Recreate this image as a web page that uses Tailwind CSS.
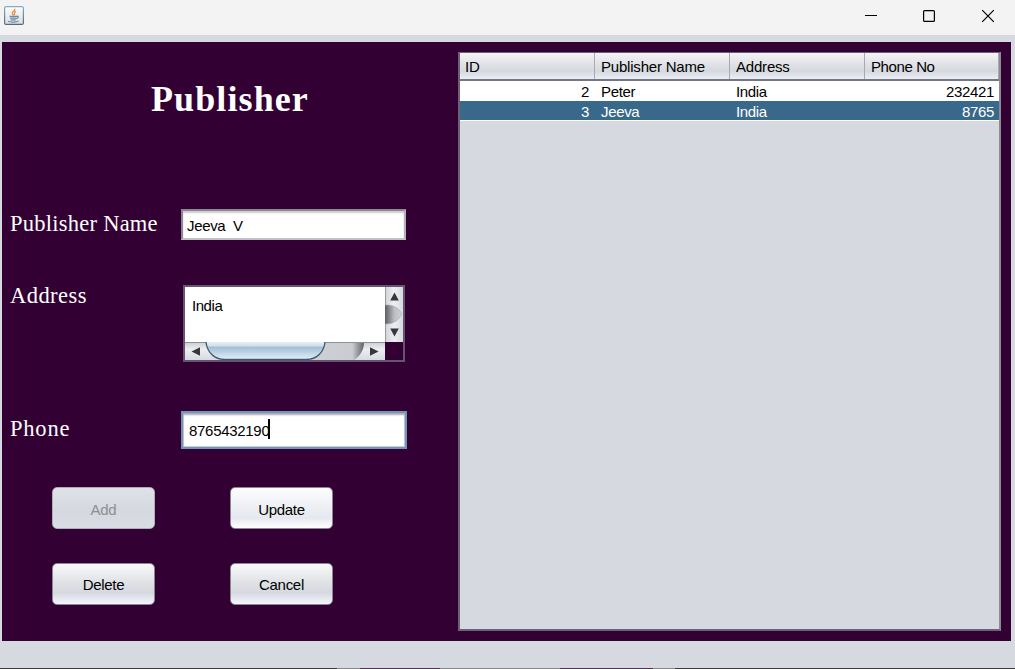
<!DOCTYPE html>
<html lang="en">
<head>
<meta charset="utf-8">
<title>Publisher</title>
<script src="https://cdn.jsdelivr.net/npm/@tailwindcss/browser@4"></script>
</head>
<body class="w-[1015px] h-[669px] overflow-hidden bg-[#d6d9e0] flex flex-col font-['Liberation_Sans',Arial,sans-serif] text-[15px] leading-[20px] tracking-[-0.2px] text-black">
  <header class="h-[35px] shrink-0 bg-[#f3f3f3] flex items-start">
    <svg class="ml-1 mt-[6px]" width="20" height="19" viewBox="0 0 20 19" fill="none">
      <defs><linearGradient id="ic" x1="0" y1="0" x2="0" y2="1"><stop stop-color="#fdfdfd"/><stop offset="1" stop-color="#dcdddf"/></linearGradient>
      <linearGradient id="ib" x1="0" y1="0" x2="0" y2="1"><stop stop-color="#8bacc0"/><stop offset="1" stop-color="#4d6c82"/></linearGradient></defs>
      <rect x=".6" y=".6" width="18.8" height="17.8" rx="1.5" fill="url(#ic)" stroke="url(#ib)" stroke-width="1.2"/>
      <path d="M10.8 2.8c.8 2-3.2 2.8-2.5 4.8.2.8 1 1.200 1.200 2M11.800 5.200c-2.500 1.300-.5 2.200-1.600 4" stroke="#e98d45" stroke-width="1.300"/>
      <path d="M5.500 10.300h7.500M6 12.200h6.500M6.800 13.900h5M12.800 10.300c2-.5 2.200 1.700-.3 2.300M4 15.300c2.500 1.100 8.500 1 10.500-.3" stroke="#6b8ba8" stroke-width="1.200"/>
    </svg>
    <svg class="ml-[841px] mt-[9px]" width="130" height="14" viewBox="0 0 130 14" fill="none" stroke="#000" stroke-width="1.200">
      <path d="M0 6.500h12" stroke-width="1"/>
      <rect x="58.600" y="1.600" width="10.800" height="10.800" rx="1"/>
      <path d="M117.200 1.200l11.600 11.600M128.800 1.200l-11.600 11.600"/>
    </svg>
  </header>
  <main class="mt-[7px] ml-[2px] w-[1009px] h-[599px] shrink-0 bg-[#330033] flex">
    <section class="w-[456px] shrink-0 flex flex-col text-white font-['Liberation_Serif','Times_New_Roman',serif]">
      <h1 class="mt-[35px] ml-[149px] h-[44px] leading-[44px] text-[36px] font-bold tracking-[1.1px] whitespace-nowrap">Publisher</h1>
      <div class="mt-[88px] flex h-[31px]">
        <label class="w-[179px] pl-[8px] text-[22.5px] leading-[30px] tracking-[0.25px] whitespace-nowrap">Publisher Name</label>
        <div class="w-[225px] h-[31px] bg-white border-2 border-[#8d8693] border-b-[#c3bfc6] border-r-[#b5b1b9] shadow-[inset_0_2px_2px_#ccc] pl-[4px] text-[15px] leading-[30px] tracking-[-0.35px] text-black font-['Liberation_Sans',Arial,sans-serif] whitespace-pre">Jeeva  V</div>
      </div>
      <div class="mt-[45px] flex h-[77px]">
        <label class="w-[181px] pl-[8px] text-[22.5px] leading-[22px] tracking-[0.45px]">Address</label>
        <div class="w-[222px] h-[77px] border-2 border-[#665570] grid grid-cols-[200px_18px] grid-rows-[55px_18px] font-['Liberation_Sans',Arial,sans-serif] text-black">
          <div class="bg-white pl-[7px] pt-[9px] text-[15px] tracking-[-0.45px]">India</div>
          <svg width="18" height="55" viewBox="0 0 18 55">
            <defs><linearGradient id="vb"><stop stop-color="#d0d2d6"/><stop offset=".5" stop-color="#eceef1"/><stop offset="1" stop-color="#d7dae0"/></linearGradient>
            <linearGradient id="vt"><stop stop-color="#5c5c61"/><stop offset=".55" stop-color="#bcbdc2"/><stop offset="1" stop-color="#d3d4d9"/></linearGradient></defs>
            <rect width="18" height="55" fill="url(#vb)"/><rect width="1" height="55" fill="#999ca2"/>
            <path d="M0 18C8 18 13 20 17 27C13 34 8 37 0 37Z" fill="url(#vt)"/>
            <path d="M0 18C8 18 13 20 17 27M0 37C8 37 13 34 17 27" fill="none" stroke="#a0a2a8" stroke-width=".6"/>
            <path d="M9.500 5.500l4.300 8h-8.600zM9.500 49.500l4.300-8h-8.600z" fill="#36373b"/>
          </svg>
          <svg width="200" height="18" viewBox="0 0 200 18">
            <defs><linearGradient id="hb" x1="0" y1="0" x2="0" y2="1"><stop stop-color="#c9ccd2"/><stop offset=".4" stop-color="#eceef1"/><stop offset="1" stop-color="#d7dae0"/></linearGradient>
            <linearGradient id="ht" x1="0" y1="0" x2="0" y2="1"><stop stop-color="#e8f0f7"/><stop offset=".22" stop-color="#d0dfeb"/><stop offset=".3" stop-color="#a4bed3"/><stop offset="1" stop-color="#e0f0fb"/></linearGradient>
            <linearGradient id="hr"><stop stop-color="#cfd0d5"/><stop offset=".8" stop-color="#cbccd1"/><stop offset="1" stop-color="#606166"/></linearGradient></defs>
            <rect width="200" height="18" fill="url(#hb)"/>
            <path d="M130 0h49c0 8-4 14-10 18h-49z" fill="url(#hr)"/>
            <rect width="200" height="1" fill="#8d9095"/>
            <path d="M21 0C22 10 29 17.500 40 17.500H121C132 17.500 139 10 140 0Z" fill="url(#ht)"/>
            <path d="M21 0C22 10 29 17.500 40 17.500H121C132 17.500 139 10 140 0" fill="none" stroke="#3d5970" stroke-width="1.300"/>
            <path d="M6.500 9.500l8.500-4.300v8.600zM193.500 9.500l-8.500-4.300v8.600z" fill="#36373b"/>
          </svg>
          <div></div>
        </div>
      </div>
      <div class="mt-[49px] flex h-[38px]">
        <label class="w-[179px] pl-[8px] text-[22.5px] leading-[36px] tracking-[0.8px]">Phone</label>
        <div class="w-[226px] h-[38px] bg-white border-2 border-[#7096bd] shadow-[inset_0_2px_2px_#aaa,inset_0_0_0_1px_#ccc] pl-[6px] flex items-center text-black font-['Liberation_Sans',Arial,sans-serif] text-[15px]">
          <span class="w-[79px] mt-[2px] tracking-[-0.3px]">8765432190</span><span class="w-[2px] h-[20px] bg-black -mt-[2px]"></span>
        </div>
      </div>
      <div class="mt-[38px] ml-[50px] grid grid-cols-[103px_103px] grid-rows-[42px_42px] gap-x-[75px] gap-y-[34px] font-['Liberation_Sans',Arial,sans-serif] text-[15px] tracking-[-0.3px] text-black">
        <button class="rounded-[5px] border border-[#aeacb4] bg-[linear-gradient(#dfe2e6,#d5d8de_55%,#d9dce4)] text-[#8e8f93] pt-[3px]">Add</button>
        <button class="rounded-[5px] border border-[#8b8693] bg-[linear-gradient(#fdfdfe,#eef0f4_45%,#e5e8ef_75%,#ffffff)] pt-[3px]">Update</button>
        <button class="rounded-[5px] border border-[#8b8693] bg-[linear-gradient(#f9f9fa,#e0e2e6_45%,#d5d8df_72%,#f3f6fd)] pt-px">Delete</button>
        <button class="rounded-[5px] border border-[#8b8693] bg-[linear-gradient(#f9f9fa,#e0e2e6_45%,#d5d8df_72%,#f3f6fd)] pt-px">Cancel</button>
      </div>
    </section>
    <section class="mt-[10px] w-[543px] h-[579px] border-2 border-t-1 border-[#6d6176] border-r-[#8b8b94] bg-[#d6d9e0]">
      <div class="grid grid-cols-[135px_135px_135px_134px] h-[28px] leading-[27px] border-b-2 border-[#737684] bg-[linear-gradient(#f4f4f6,#dfe1e5_45%,#d5d8df_70%,#ebeef4)]">
        <div class="pl-[5px] border-r border-[#a7aab2] h-[26px]">ID</div>
        <div class="pl-[6px] border-r border-[#a7aab2] h-[26px]">Publisher Name</div>
        <div class="pl-[6px] border-r border-[#a7aab2] h-[26px]">Address</div>
        <div class="pl-[6px] border-r border-[#a7aab2] h-[26px] tracking-[-0.4px]">Phone No</div>
      </div>
      <div class="grid grid-cols-[135px_135px_135px_134px] h-[20px] leading-[21px] tracking-[-0.35px] bg-white">
        <div class="text-right pr-[6px]">2</div><div class="pl-[6px]">Peter</div><div class="pl-[6px]">India</div><div class="text-right pr-[5px]">232421</div>
      </div>
      <div class="grid grid-cols-[135px_135px_135px_134px] h-[20px] leading-[21px] tracking-[-0.35px] bg-[#39698a] text-white border-b border-white">
        <div class="text-right pr-[6px]">3</div><div class="pl-[6px]">Jeeva</div><div class="pl-[6px]">India</div><div class="text-right pr-[5px]">8765</div>
      </div>
    </section>
  </main>
  <footer class="mt-auto h-px flex shrink-0 bg-[#3c3c3c]">
    <div class="ml-[337px] w-[23px] bg-[#888]"></div><div class="w-[80px] bg-[#54304f]"></div><div class="w-[120px] bg-[#888]"></div><div class="w-[93px] bg-[#54304f]"></div><div class="w-[22px] bg-[#888]"></div>
  </footer>
</body>
</html>
